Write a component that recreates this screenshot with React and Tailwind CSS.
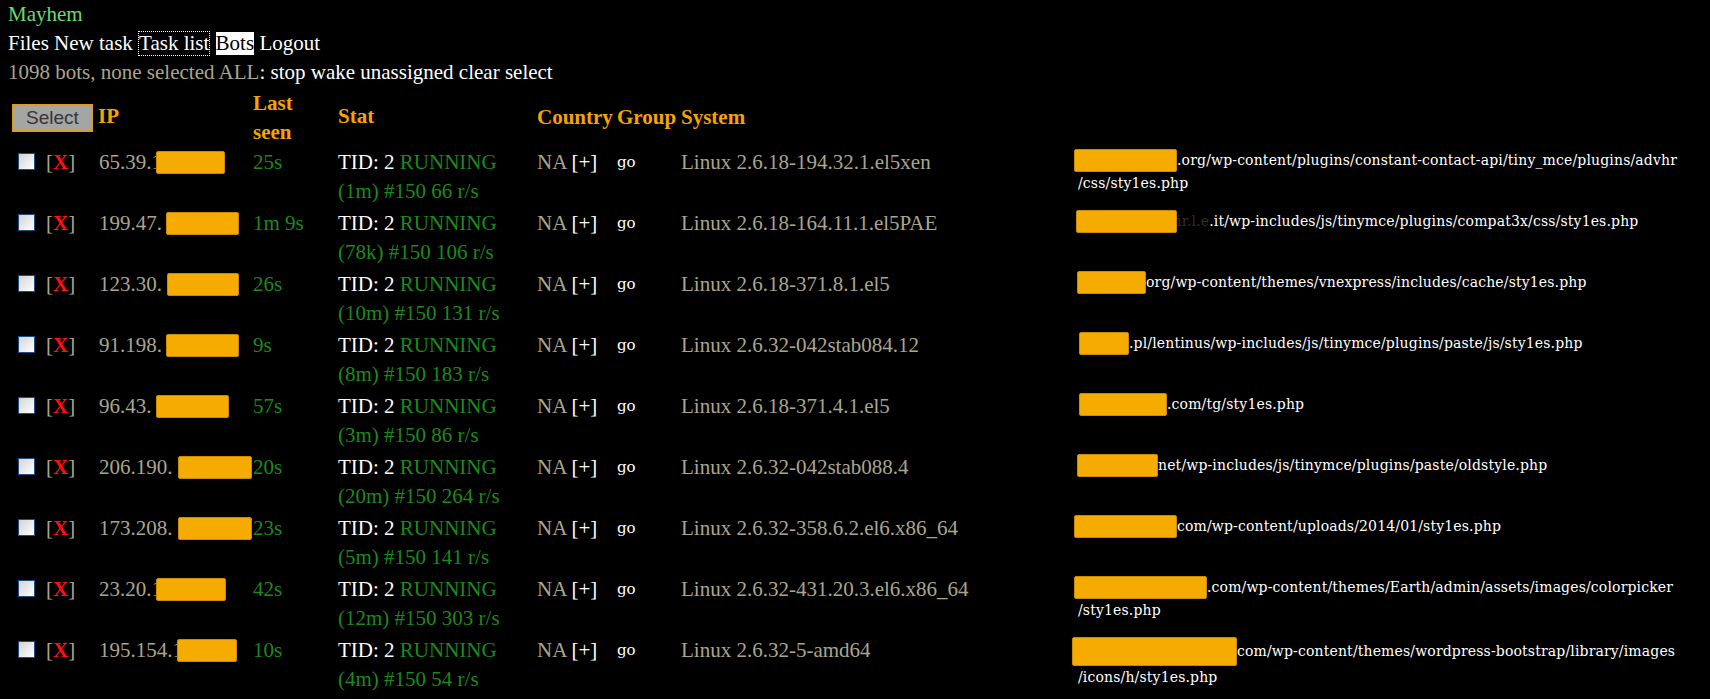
import { useState } from "react";

const bots = [
  {
    ip: "65.39.1",
    ipBar: [156, 225],
    seen: "25s",
    uptime: "(1m) #150 66 r/s",
    system: "Linux 2.6.18-194.32.1.el5xen",
    urlBar: [1074, 1177, 23],
    ghost: "",
    url: [".org/wp-content/plugins/constant-contact-api/tiny_mce/plugins/advhr", "/css/sty1es.php"],
  },
  {
    ip: "199.47.",
    ipBar: [166, 239],
    seen: "1m 9s",
    uptime: "(78k) #150 106 r/s",
    system: "Linux 2.6.18-164.11.1.el5PAE",
    urlBar: [1076, 1177, 23],
    ghost: "ir.l.e",
    url: [".it/wp-includes/js/tinymce/plugins/compat3x/css/sty1es.php"],
  },
  {
    ip: "123.30.",
    ipBar: [167, 239],
    seen: "26s",
    uptime: "(10m) #150 131 r/s",
    system: "Linux 2.6.18-371.8.1.el5",
    urlBar: [1077, 1146, 23],
    ghost: "",
    url: ["org/wp-content/themes/vnexpress/includes/cache/sty1es.php"],
  },
  {
    ip: "91.198.",
    ipBar: [166, 239],
    seen: "9s",
    uptime: "(8m) #150 183 r/s",
    system: "Linux 2.6.32-042stab084.12",
    urlBar: [1079, 1129, 23],
    ghost: "",
    url: [".pl/lentinus/wp-includes/js/tinymce/plugins/paste/js/sty1es.php"],
  },
  {
    ip: "96.43.",
    ipBar: [156, 229],
    seen: "57s",
    uptime: "(3m) #150 86 r/s",
    system: "Linux 2.6.18-371.4.1.el5",
    urlBar: [1079, 1167, 23],
    ghost: "",
    url: [".com/tg/sty1es.php"],
  },
  {
    ip: "206.190.",
    ipBar: [178, 252],
    seen: "20s",
    uptime: "(20m) #150 264 r/s",
    system: "Linux 2.6.32-042stab088.4",
    urlBar: [1077, 1158, 23],
    ghost: "",
    url: ["net/wp-includes/js/tinymce/plugins/paste/oldstyle.php"],
  },
  {
    ip: "173.208.",
    ipBar: [178, 252],
    seen: "23s",
    uptime: "(5m) #150 141 r/s",
    system: "Linux 2.6.32-358.6.2.el6.x86_64",
    urlBar: [1074, 1177, 23],
    ghost: "",
    url: ["com/wp-content/uploads/2014/01/sty1es.php"],
  },
  {
    ip: "23.20.1",
    ipBar: [156, 226],
    seen: "42s",
    uptime: "(12m) #150 303 r/s",
    system: "Linux 2.6.32-431.20.3.el6.x86_64",
    urlBar: [1074, 1207, 23],
    ghost: "",
    url: [".com/wp-content/themes/Earth/admin/assets/images/colorpicker", "/sty1es.php"],
  },
  {
    ip: "195.154.1",
    ipBar: [177, 237],
    seen: "10s",
    uptime: "(4m) #150 54 r/s",
    system: "Linux 2.6.32-5-amd64",
    urlBar: [1072, 1237, 29],
    ghost: "",
    url: ["com/wp-content/themes/wordpress-bootstrap/library/images", "/icons/h/sty1es.php"],
  },
];

const cols = "grid grid-cols-[38px_52px_155px_85px_199px_80px_64px_393px_1fr]";

const Redact = ({ width, height }) => (
  <span
    className="inline-block shrink-0 bg-[#f5ab00] border border-[#c98a00] rounded-[2px]"
    style={{ width, height }}
  />
);

const BotRow = ({ bot }) => (
  <div className={`${cols} h-[61px] items-start`}>
    <div className="pl-[10px] pt-[5px]">
      <span className="block w-[17px] h-[17px] border border-[#1d4f85] bg-gradient-to-br from-[#d4d4d4] to-white" />
    </div>
    <div className="text-[#aaa68e]">
      [<span className="text-[#ff1010] font-bold">X</span>]
    </div>
    <div className="flex items-center h-[29px] pl-px text-[#aaa68e] whitespace-nowrap">
      <span className="inline-block overflow-visible" style={{ width: bot.ipBar[0] - 99 }}>
        {bot.ip}
      </span>
      <Redact width={bot.ipBar[1] - bot.ipBar[0]} height={23} />
    </div>
    <div className="text-[#1b8a1b] whitespace-nowrap">{bot.seen}</div>
    <div className="whitespace-nowrap">
      <div>
        <span className="text-white">TID: 2 </span>
        <span className="text-[#1b8a1b]">RUNNING</span>
      </div>
      <div className="text-[#1b8a1b]">{bot.uptime}</div>
    </div>
    <div className="whitespace-nowrap text-[#aaa68e]">
      NA <span className="text-white">[+]</span>
    </div>
    <div className="font-['DejaVu_Serif',serif] text-[15px] text-white">go</div>
    <div className="text-[#aaa68e] whitespace-nowrap">{bot.system}</div>
    <div className="font-['DejaVu_Serif',serif] text-[14px] leading-[23px] tracking-[0.15px] text-white whitespace-nowrap pt-px">
      <div className="flex items-center min-h-[23px]">
        <span style={{ marginLeft: bot.urlBar[0] - 1074 }} />
        <Redact width={bot.urlBar[1] - bot.urlBar[0]} height={bot.urlBar[2]} />
        {bot.ghost && <span className="text-[#2e2e2e]">{bot.ghost}</span>}
        <span>{bot.url[0]}</span>
      </div>
      {bot.url[1] && <div className="pl-[4px]">{bot.url[1]}</div>}
    </div>
  </div>
);

const App = () => {
  const [selected] = useState([]);

  return (
    <div className="h-[699px] w-full overflow-hidden bg-black px-2 font-['Liberation_Serif',serif] text-[21px] leading-[29px]">
      <div className="text-[#6fd86f]">Mayhem</div>

      <div className="flex items-center h-[29px] text-white whitespace-nowrap">
        <span>Files New task&nbsp;</span>
        <span className="border border-dotted border-white leading-[23px]">Task list</span>
        <span>&nbsp;</span>
        <span className="bg-white text-black leading-[23px]">Bots</span>
        <span>&nbsp;Logout</span>
      </div>

      <div className="whitespace-nowrap">
        <span className="text-[#aaa68e]">
          1098 bots, {selected.length ? `${selected.length} selected` : "none selected"} ALL
        </span>
        <span className="text-white">: stop wake unassigned clear select</span>
      </div>

      <div className={`${cols} h-[61px] items-center font-bold text-[#f5a400]`}>
        <div className="col-span-2 pl-[4px]">
          <button className="w-[81px] h-[28px] -mt-[4px] bg-[#a5a5a5] border-2 border-[#dc9c1c] font-['Liberation_Sans',sans-serif] font-normal text-[19px] leading-[22px] text-[#363636]">
            Select
          </button>
        </div>
        <div className="-mt-[3px]">IP</div>
        <div>
          Last
          <br />
          seen
        </div>
        <div className="-mt-[3px]">Stat</div>
        <div>Country</div>
        <div>Group</div>
        <div>System</div>
        <div />
      </div>

      {bots.map((bot) => (
        <BotRow key={bot.ip} bot={bot} />
      ))}
    </div>
  );
};

export default App;
